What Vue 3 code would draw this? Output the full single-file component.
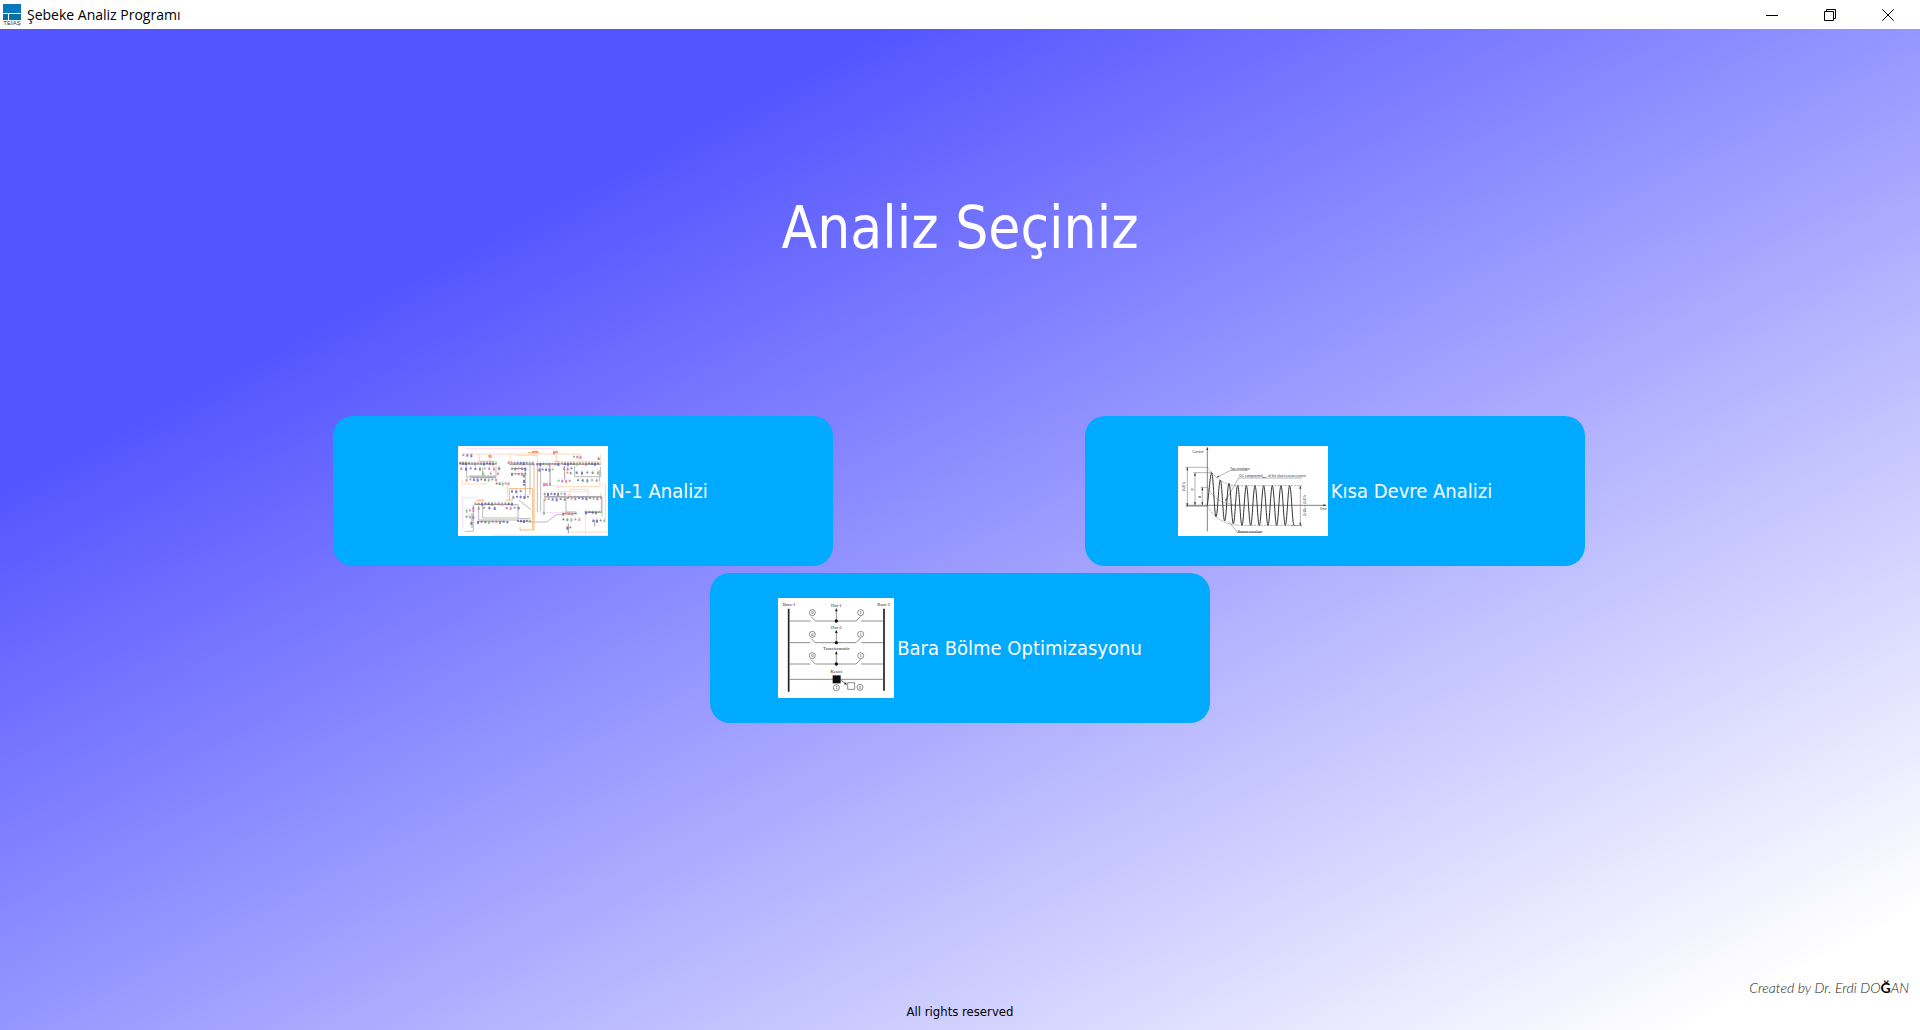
<script setup>
const colours = ['#5a5ad0', '#777', '#e08080', '#5b5bc0', '#6cc070', '#888', '#5a5aa0', '#b868c0']

// Rows of feeder symbols on the network map: start x, end x, y, spacing
const rows = [
  [30, 140, 71, 9], [34, 150, 86, 14], [50, 140, 118, 11], [176, 250, 70, 9], [186, 226, 86, 10],
  [186, 226, 101, 10], [140, 180, 132, 9], [262, 330, 72, 9], [268, 310, 88, 10], [336, 452, 72, 9],
  [342, 372, 86, 11], [282, 304, 132, 9], [326, 366, 124, 11], [222, 228, 108, 9], [222, 226, 122, 9], [222, 226, 136, 9],
  [186, 216, 154, 13], [190, 236, 170, 11], [76, 190, 192, 10], [170, 215, 204, 12], [50, 70, 211, 10],
  [50, 70, 232, 10], [64, 72, 250, 9], [84, 175, 245, 11], [204, 240, 244, 9], [284, 350, 162, 10],
  [284, 350, 177, 12], [354, 455, 176, 11], [282, 284, 220, 9], [340, 380, 220, 9], [340, 392, 240, 12],
  [430, 466, 242, 11], [408, 452, 216, 10], [40, 68, 47, 12], [118, 124, 48, 9], [312, 322, 36, 8],
  [372, 396, 52, 10], [446, 452, 56, 9], [352, 362, 262, 9], [384, 440, 122, 14], [380, 450, 98, 16],
  [148, 152, 84, 9], [352, 366, 100, 10], [70, 134, 204, 16], [100, 160, 100, 22]
]

const symbols = rows.flatMap(([from, to, y, step], row) => {
  const list = []
  for (let x = from, i = 0; x <= to; x += step, i++) {
    list.push({ x, y: y - 4 + ((i * 3 + row) % 3), h: 5 + ((i + row) % 3) * 2, fill: colours[(i * 3 + row * 5) % colours.length] })
  }
  return list
})

const peaks = [98, 120, 130, 137, 137, 137, 137, 137, 137, 137]
const troughs = [230, 243, 251, 256, 256, 256, 256, 256, 256, 256]
let wave = 'M112 196C117 160 121 98 125 98'
peaks.forEach((peak, i) => {
  const x = 125 + i * 26
  wave += `C${x + 5} ${peak} ${x + 8} ${troughs[i]} ${x + 13} ${troughs[i]}`
  if (i < peaks.length - 1) {
    wave += `C${x + 18} ${troughs[i]} ${x + 21} ${peaks[i + 1]} ${x + 26} ${peaks[i + 1]}`
  }
})

const feeders = [
  { name: 'Hat-1', y: 90 },
  { name: 'Hat-2', y: 155 },
  { name: 'Transformatör', y: 219 }
]
</script>

<template>
  <div class="window">
    <header class="titlebar">
      <svg class="logo" viewBox="0 0 18 22" aria-hidden="true">
        <path fill="#0878bd" d="M0 0h18v9H0z" />
        <path fill="#086fa3" d="M0 10h5v6H0zM6 10h12v6H6z" />
        <text x="9" y="21" text-anchor="middle">TEİAŞ</text>
      </svg>
      <span class="caption">Şebeke Analiz Programı</span>
      <div class="controls">
        <button class="control" aria-label="Simge durumuna küçült">
          <svg viewBox="0 0 12 12"><path d="M0 6.500h12" /></svg>
        </button>
        <button class="control" aria-label="Önceki boyut">
          <svg viewBox="0 0 12 12"><path d="M.5 2.500h9v9h-9zM2.500 2.500v-2h9v9h-2" /></svg>
        </button>
        <button class="control" aria-label="Kapat">
          <svg viewBox="0 0 12 12"><path d="M.3.3l11.400 11.400M11.700.3L.3 11.700" /></svg>
        </button>
      </div>
    </header>

    <main class="content">
      <h1>Analiz Seçiniz</h1>

      <div class="choices">
        <div class="row pair">
          <button class="card">
            <svg class="thumb" viewBox="24 18 450 270" aria-hidden="true">
              <path fill="#fff" d="M24 18h450v270H24z" />
              <g fill="none">
                <path stroke="#f7c9f7" stroke-width="2" d="M48 26h270M130 286h344M38 173v90M38 173h42M270 218h70M406 220v66M290 137h34v18h90" />
                <path stroke="#ffd9b8" stroke-width="3" d="M40 42h280v24M88 43v24M120 50v14M180 64V40M196 46h66v20M318 42h70v26M36 120v12h70v-16M320 66h132M452 44v28M320 140h130v-16M355 276h119M355 160v12M360 168v-20h54v20M452 160v12M466 130v110M78 180h28M172 128v40" />
                <path stroke="#f9b877" stroke-width="3" d="M178 180v-34h70v124h-38v-8M252 70v202M80 181h22M168 180h22M30 67h20M88 64h46M174 66h12M314 64h14M234 38h34" />
                <path stroke="#bbb" stroke-width="3" d="M28 72h112M50 80v30h88V80M58 108h80M98 82v28M180 74h74M262 74v142M272 74v140M262 72h70M336 73h116M374 78v32h78V80M182 86h42M182 101h42M74 194h130v42h36M86 198v42h120M98 196v38h108M70 194v80H44M282 170h66v50M282 182v40M354 170h100v48M348 216h32M226 84v90M240 74v90M206 180l38 30M238 246h52l30-22h20M404 216h52M456 170v60M448 90v34" />
                <path stroke="#777" stroke-width="2" d="M28 72h112M176 72h78M262 72h70M336 72h116M62 113h76M74 193h108M284 171h170M86 244h80M204 244h40M340 221h42M404 217h50M186 86h40M66 220v44M355 250v30M434 240v20M344 78v40M300 78v54" />
              </g>
              <g v-for="(s, i) in symbols" :key="i">
                <rect :x="s.x - 3" :y="s.y" width="6" :height="s.h" :fill="s.fill" opacity=".8" />
                <path stroke="#999" stroke-width="1" :d="`M${s.x} ${s.y - 5}v5`" />
              </g>
              <path fill="#ff9a80" d="M246 32h18v7h-18zM312 34h12v6h-12zM117 45h8v8h-8zM346 217h10v7h-10zM284 130h10v8h-10z" />
            </svg>
            <span>N-1 Analizi</span>
          </button>

          <button class="card">
            <svg class="thumb" viewBox="24 18 450 270" aria-hidden="true">
              <path fill="#fff" d="M24 18h450v270H24z" />
              <g fill="none" stroke="#666" stroke-width="1.500">
                <path stroke="#444" stroke-width="2" d="M112 24v250M48 196h420" />
                <path d="M46 82h66M46 199h66M52 82v117M70 98h55M75 98v98M92 142h20M97 142v54M391 137v120M362 257h34" />
                <path stroke-dasharray="7 3" d="M112 82C140 118 165 137 203 137H396M112 142C132 178 158 194 218 196M112 199C136 238 168 256 216 256H396" />
                <path d="M140 112l42-21h50M166 184l40-70h190M178 246l24 31h70" />
                <path :d="wave" stroke="#333" stroke-width="3" />
              </g>
              <path fill="#333" d="M112 20l-3 10h6zM470 196l-10-3v6zM52 82l-3 9h6zM52 199l-3-9h6zM75 98l-3 9h6zM75 196l-3-9h6zM97 142l-3 9h6zM97 196l-3-9h6zM391 137l-3 9h6zM391 257l-3-9h6zM140 112l8-1-3-4zM166 184l1-9 4 2z" />
              <g class="plot-text">
                <text x="67" y="40">Current</text>
                <text x="180" y="89">Top envelope</text>
                <text x="208" y="112">DC component</text>
                <text x="275" y="112" font-weight="bold">i</text>
                <text x="278" y="115" font-weight="bold" class="sub">DC</text>
                <text x="294" y="112">of the short-circuit current</text>
                <text x="203" y="279">Bottom envelope</text>
                <text x="449" y="209">Time</text>
                <text transform="translate(45 154) rotate(-90)">2√2I″k</text>
                <text transform="translate(70 152) rotate(-90)">ip</text>
                <text transform="translate(93 174) rotate(-90)">A</text>
                <text transform="translate(408 228) rotate(-90)">2√2Ik = 2√2I″k</text>
              </g>
            </svg>
            <span>Kısa Devre Analizi</span>
          </button>
        </div>

        <div class="row">
          <button class="card">
            <svg class="thumb busbar" viewBox="29 21 348 300" aria-hidden="true">
              <path fill="#fff" d="M29 21h348v300H29z" />
              <path fill="none" stroke="#222" stroke-width="5" d="M61 53v249M347 53v246" />
              <g class="bus-text">
                <text x="62" y="44">Bara-1</text>
                <text x="346" y="45">Bara-2</text>
                <text x="204" y="246">Kesici</text>
              </g>
              <g v-for="f in feeders" :key="f.name" fill="none" stroke="#555" stroke-width="2">
                <path :d="`M61 ${f.y}h65M141 ${f.y}h122M279 ${f.y}h68M141 ${f.y}l-13-13M263 ${f.y}l14-14M204 ${f.y}v-34`" />
                <circle cx="132" :cy="f.y - 25" r="9" />
                <circle cx="277" :cy="f.y - 25" r="9" />
                <circle cx="204" :cy="f.y" r="5" fill="#111" stroke="none" />
                <path fill="#222" stroke="none" :d="`M204 ${f.y - 39}l-4 10h8z`" />
                <g class="bus-text" stroke="none">
                  <text x="204" :y="f.y - 41">{{ f.name }}</text>
                  <text x="132" :y="f.y - 20">0</text>
                  <text x="277" :y="f.y - 20">1</text>
                </g>
              </g>
              <g fill="none" stroke="#555" stroke-width="2">
                <path d="M61 265h286" />
                <path fill="#111" stroke="none" d="M193 253h24v24h-24z" />
                <path stroke="#222" d="M218 268l14 10" />
                <path fill="#222" stroke="none" d="M236 281l-9-1 5-6z" />
                <path d="M238 275h21v20h-21z" />
                <circle cx="204" cy="290" r="9" />
                <circle cx="275" cy="289" r="9" />
              </g>
              <g class="bus-text">
                <text x="204" y="295">1</text>
                <text x="275" y="294">0</text>
              </g>
            </svg>
            <span>Bara Bölme Optimizasyonu</span>
          </button>
        </div>
      </div>

      <footer>
        <p class="author">Created by Dr. Erdi DO<span>Ğ</span>AN</p>
        <p class="rights">All rights reserved</p>
      </footer>
    </main>
  </div>
</template>

<style>
body {
  margin: 0;
}
</style>

<style scoped>
.window {
  display: flex;
  flex-direction: column;
  min-height: 100vh;
  font-family: "DejaVu Sans Condensed", "DejaVu Sans", sans-serif;
}

.titlebar {
  display: flex;
  align-items: center;
  height: 29px;
  background: #fff;
}

.logo {
  width: 18px;
  height: 22px;
  margin: 0 6px 0 3px;
}

.logo text {
  font: 6px "Liberation Sans", sans-serif;
  fill: #333;
}

.caption {
  font: 14px/20px "Open Sans", sans-serif;
  color: #000;
}

.controls {
  display: flex;
  margin-left: auto;
  padding-right: 3px;
}

.control {
  display: flex;
  align-items: center;
  justify-content: center;
  width: 58px;
  height: 28px;
  padding: 0;
  border: 0;
  background: none;
}

.control svg {
  width: 12px;
  height: 12px;
  fill: none;
  stroke: #000;
}

.content {
  display: flex;
  flex: 1;
  flex-direction: column;
  background: linear-gradient(to bottom right, #5555ff 23%, #ffffff 94%);
}

h1 {
  margin: 161px 0 0;
  font-size: 58px;
  font-weight: 400;
  line-height: 76px;
  text-align: center;
  color: #fff;
}

.choices {
  display: flex;
  flex-direction: column;
  gap: 7px;
  margin-top: 150px;
}

.row {
  display: flex;
  justify-content: center;
  gap: 252px;
}

.pair {
  padding-right: 2px;
}

.card {
  display: flex;
  align-items: center;
  justify-content: center;
  gap: 3px;
  width: 500px;
  height: 150px;
  padding: 0;
  border: 0;
  border-radius: 20px;
  background: #00aaff;
  font: 20px/26px "DejaVu Sans Condensed", "DejaVu Sans", sans-serif;
  color: #fff;
}

.thumb {
  width: 150px;
  height: 90px;
}

.busbar {
  width: 116px;
  height: 100px;
}

.plot-text {
  font: 10px "Liberation Sans", sans-serif;
  fill: #333;
}

.sub {
  font-size: 7px;
}

.bus-text {
  font: 14px "Liberation Serif", serif;
  text-anchor: middle;
  fill: #222;
}

footer {
  margin-top: auto;
  font-size: 13px;
  color: #000;
}

footer p {
  margin: 0;
}

.author {
  padding-right: 11px;
  font: italic 300 14px/20px Lato, sans-serif;
  text-align: right;
  color: #222;
}

.author span {
  font-style: normal;
  font-weight: 700;
  color: #000;
}

.rights {
  padding: 6px 0 10px;
  line-height: 16px;
  text-align: center;
}
</style>
